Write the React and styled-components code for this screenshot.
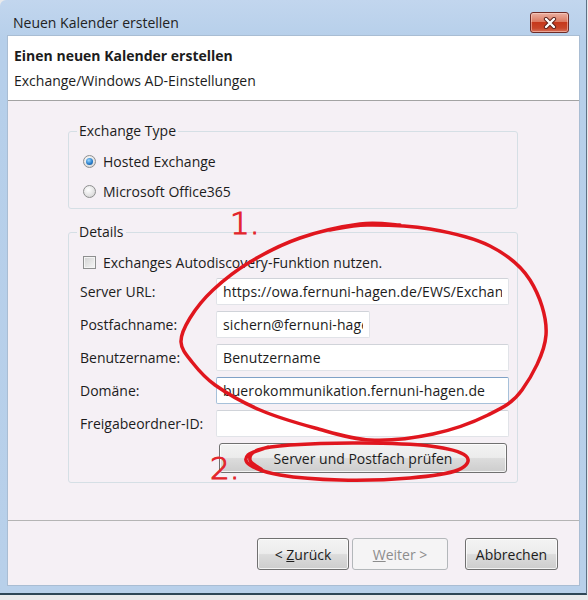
import React from 'react';
import styled, { createGlobalStyle, css } from 'styled-components';

const GlobalStyle = createGlobalStyle`
  html, body {
    margin: 0;
    padding: 0;
    background: #e9eaec;
  }
  body {
    width: 588px;
    height: 600px;
    overflow: hidden;
    font-family: "Open Sans", "Noto Sans", sans-serif;
    font-size: 14px;
    color: #1c1c1c;
  }
`;

const Window = styled.div`
  position: relative;
  box-sizing: border-box;
  width: 587px;
  height: 595px;
  display: flex;
  flex-direction: column;
  padding: 0 7px 8px 8px;
  background: linear-gradient(#c2d6ee, #b6cfea 40px, #b8d0ea);
  border-right: 1px solid #5d7186;
  border-bottom: 2px solid #2e4656;
  border-top-left-radius: 6px;
`;

const TitleBar = styled.div`
  height: 36px;
  display: flex;
  align-items: flex-start;
  justify-content: space-between;
  padding: 0 10px 0 5px;
`;

const TitleText = styled.div`
  padding-top: 13px;
  line-height: 20px;
  color: #222;
`;

const CloseButton = styled.div`
  box-sizing: border-box;
  margin-top: 12px;
  width: 39px;
  height: 21px;
  display: flex;
  align-items: center;
  justify-content: center;
  border: 1px solid #6e2b26;
  border-radius: 3px;
  background: linear-gradient(#eab0a2 0%, #dc7a62 45%, #c6381c 50%, #c8462a 80%, #d8725c 100%);
  box-shadow: inset 0 0 0 1px rgba(255, 220, 210, 0.5);
`;

const Client = styled.div`
  flex: 1;
  display: flex;
  flex-direction: column;
  background: #f5f0f5;
  box-shadow: 0 0 0 1px #a9bdd3;
`;

const Header = styled.div`
  box-sizing: border-box;
  height: 65px;
  padding: 10px 6px 0;
  background: #fff;
  border-bottom: 1px solid #a3a3a3;
`;

const HeaderTitle = styled.div`
  line-height: 20px;
  font-weight: 700;
`;

const HeaderSub = styled.div`
  margin-top: 5px;
  line-height: 20px;
`;

const Body = styled.div`
  flex: 1;
  padding: 21px 0 0 60px;
`;

const Group = styled.fieldset`
  box-sizing: border-box;
  width: 450px;
  margin: ${(p) => (p.$gap ? `${p.$gap}px` : 0)} 0 0 0;
  padding: ${(p) => p.$pt}px 8px ${(p) => p.$pb}px 8px;
  border: 1px solid #d5dfe5;
  border-radius: 3px;
  min-width: 0;
`;

const Legend = styled.legend`
  padding: 0 2px;
  line-height: 18px;
`;

const OptionRow = styled.label`
  height: ${(p) => p.$h}px;
  display: flex;
  align-items: center;
  gap: 7px;
  padding-left: 6px;
  margin-top: ${(p) => p.$mt || 0}px;
`;

const Radio = styled.span`
  position: relative;
  flex: none;
  box-sizing: border-box;
  width: 13px;
  height: 13px;
  border-radius: 50%;
  border: 1px solid #8e8f8f;
  background: radial-gradient(circle at 40% 35%, #ffffff, #e2e2e2 60%, #c9c9c9);
  ${(p) =>
    p.$checked &&
    css`
      &::after {
        content: '';
        position: absolute;
        left: 2px;
        top: 2px;
        width: 7px;
        height: 7px;
        border-radius: 50%;
        background: radial-gradient(circle at 40% 35%, #9ad8ff, #2b7fcc 55%, #0d4a8a);
      }
    `}
`;

const Checkbox = styled.span`
  flex: none;
  box-sizing: border-box;
  width: 13px;
  height: 13px;
  border: 1px solid #8e8f8f;
  background: linear-gradient(135deg, #d2d2d2, #f6f6f6);
  box-shadow: inset 0 0 0 1px #f4f4f4;
`;

const FieldGrid = styled.div`
  margin-top: 2px;
  display: grid;
  grid-template-columns: 139px 1fr;
  grid-auto-rows: 27px;
  row-gap: 6px;
`;

const FieldLabel = styled.div`
  padding-left: 3px;
  display: flex;
  align-items: center;
`;

const TextInput = styled.input`
  box-sizing: border-box;
  height: 27px;
  width: ${(p) => (p.$w ? `${p.$w}px` : '100%')};
  padding: 0 6px;
  border: 1px solid ${(p) => (p.$focus ? '#a7c1da' : '#e1e3e8')};
  border-top-color: ${(p) => (p.$focus ? '#7fa1c6' : '#d0d3d9')};
  border-radius: 2px;
  background: #fff;
  font: 14px "Open Sans", "Noto Sans", sans-serif;
  letter-spacing: 0.1px;
  color: #1c1c1c;
  outline: none;
`;

const ButtonRow = styled.div`
  margin-top: 6px;
  padding: 0 2px 0 142px;
  display: flex;
`;

const Button = styled.button`
  box-sizing: border-box;
  height: ${(p) => p.$h || 32}px;
  width: ${(p) => (p.$w ? `${p.$w}px` : '100%')};
  margin-left: ${(p) => p.$ml || 0}px;
  padding: 0;
  font: 14px "Open Sans", "Noto Sans", sans-serif;
  color: #1c1c1c;
  border: 1px solid #707070;
  border-radius: 3px;
  background: linear-gradient(#f3f3f3 0%, #ececec 48%, #dcdcdc 52%, #cdcdcd 100%);
  box-shadow: inset 0 0 0 1px rgba(255, 255, 255, 0.75);

  &:disabled {
    color: #8d8d8d;
    border-color: #b3b7ba;
    background: #f5f4f5;
    box-shadow: none;
  }
`;

const Footer = styled.div`
  box-sizing: border-box;
  height: 65px;
  padding: 17px 21px 0 0;
  display: flex;
  justify-content: flex-end;
  align-items: flex-start;
  border-top: 1px solid #b4b4b4;
`;

const Overlay = styled.svg`
  position: absolute;
  left: 0;
  top: 0;
  pointer-events: none;
  overflow: visible;
`;

const Mark = styled.text`
  font-family: "DejaVu Sans", "Open Sans", sans-serif;
  font-weight: 200;
  font-size: 31px;
  fill: #e3262c;
  stroke: #e3262c;
  stroke-width: 1.1px;
`;

// catmull-rom -> cubic bezier for the hand-drawn circles
const smooth = (pts) => {
  let d = `M${pts[0][0]},${pts[0][1]}`;
  for (let i = 0; i < pts.length - 1; i++) {
    const p0 = pts[i - 1] || pts[i];
    const p1 = pts[i];
    const p2 = pts[i + 1];
    const p3 = pts[i + 2] || p2;
    const c1 = [p1[0] + (p2[0] - p0[0]) / 6, p1[1] + (p2[1] - p0[1]) / 6];
    const c2 = [p2[0] - (p3[0] - p1[0]) / 6, p2[1] - (p3[1] - p1[1]) / 6];
    d += ` C${c1[0]},${c1[1]} ${c2[0]},${c2[1]} ${p2[0]},${p2[1]}`;
  }
  return d;
};

const loopOne = [
  [330, 230], [367, 225], [430, 229], [490, 246], [530, 280], [546, 335],
  [522, 390], [488, 415], [433, 434], [370, 440], [315, 428], [260, 410],
  [215, 385], [192, 362], [181, 342], [190, 318], [213, 290], [250, 262],
  [300, 238], [360, 224], [400, 225],
];

const loopTwo = [
  [262, 470], [250, 460], [258, 450], [290, 445], [360, 443], [430, 446],
  [466, 456], [458, 470], [410, 478], [340, 480], [280, 475], [250, 465],
  [248, 455], [268, 447],
];

const CloseIcon = () => (
  <svg width="14" height="12" viewBox="0 0 14 12">
    <path d="M3 2 L11 10 M11 2 L3 10" stroke="#5a1f1a" strokeWidth="4.2" strokeLinecap="round" />
    <path d="M3 2 L11 10 M11 2 L3 10" stroke="#ffffff" strokeWidth="2.4" strokeLinecap="round" />
  </svg>
);

const fields = [
  { label: 'Server URL:', value: 'https://owa.fernuni-hagen.de/EWS/Exchange.asmx' },
  { label: 'Postfachname:', value: 'sichern@fernuni-hagen.de', width: 154 },
  { label: 'Benutzername:', value: 'Benutzername' },
  { label: 'Domäne:', value: 'buerokommunikation.fernuni-hagen.de', focus: true },
  { label: 'Freigabeordner-ID:', value: '' },
];

export default function App() {
  return (
    <>
      <GlobalStyle />
      <Window>
        <TitleBar>
          <TitleText>Neuen Kalender erstellen</TitleText>
          <CloseButton>
            <CloseIcon />
          </CloseButton>
        </TitleBar>
        <Client>
          <Header>
            <HeaderTitle>Einen neuen Kalender erstellen</HeaderTitle>
            <HeaderSub>Exchange/Windows AD-Einstellungen</HeaderSub>
          </Header>
          <Body>
            <Group $pt={6} $pb={2}>
              <Legend>Exchange Type</Legend>
              <OptionRow $h={30}>
                <Radio $checked />
                Hosted Exchange
              </OptionRow>
              <OptionRow $h={30}>
                <Radio />
                Microsoft Office365
              </OptionRow>
            </Group>
            <Group $gap={14} $pt={0} $pb={9}>
              <Legend>Details</Legend>
              <OptionRow $h={28} $mt={7}>
                <Checkbox />
                Exchanges Autodiscovery-Funktion nutzen.
              </OptionRow>
              <FieldGrid>
                {fields.map((f) => (
                  <React.Fragment key={f.label}>
                    <FieldLabel>{f.label}</FieldLabel>
                    <TextInput readOnly defaultValue={f.value} $w={f.width} $focus={f.focus} />
                  </React.Fragment>
                ))}
              </FieldGrid>
              <ButtonRow>
                <Button $h={30}>Server und Postfach prüfen</Button>
              </ButtonRow>
            </Group>
          </Body>
          <Footer>
            <Button $w={92}>&lt; <u>Z</u>urück</Button>
            <Button $w={96} $ml={3} disabled>
              <u>W</u>eiter &gt;
            </Button>
            <Button $w={93} $ml={17}>Abbrechen</Button>
          </Footer>
        </Client>
        <Overlay width="588" height="600" viewBox="0 0 588 600">
          <path d={smooth(loopOne)} fill="none" stroke="#e0161e" strokeWidth="3.5" strokeLinecap="round" />
          <path d={smooth(loopTwo)} fill="none" stroke="#e0161e" strokeWidth="3.5" strokeLinecap="round" />
          <Mark x="230" y="234">1.</Mark>
          <Mark x="210" y="479">2.</Mark>
        </Overlay>
      </Window>
    </>
  );
}
